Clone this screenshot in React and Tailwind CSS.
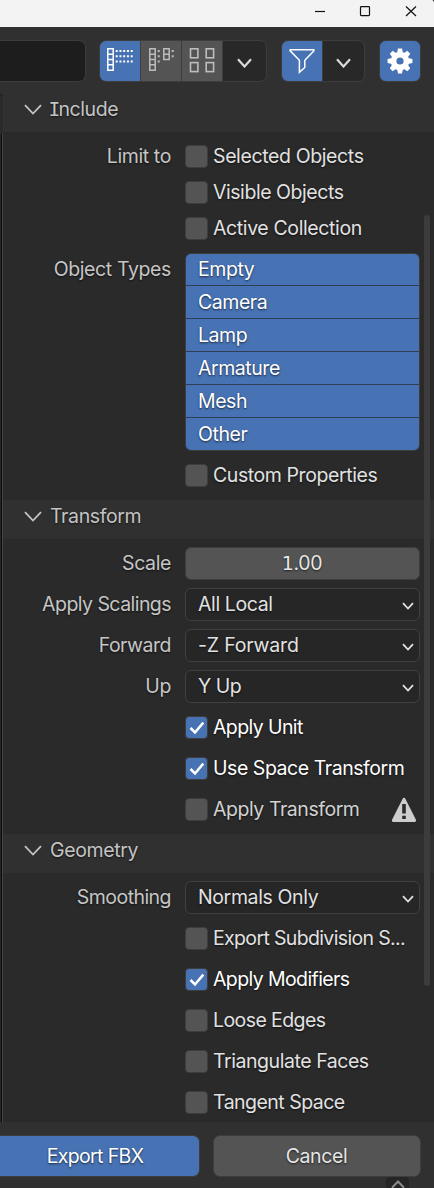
import React from 'react';

const textShadow = '[text-shadow:0_1px_2px_rgba(0,0,0,0.65)]';

function Chevron({ className = '', w = 14, h = 9, stroke = 2 }) {
  return (
    <svg width={w} height={h} viewBox={`0 0 ${w} ${h}`} fill="none" className={`shrink-0 ${className}`}>
      <path d={`M1 1.2L${w / 2} ${h - 1.5}L${w - 1} 1.2`} stroke="currentColor" strokeWidth={stroke} />
    </svg>
  );
}

function Header({ title, className = '' }) {
  return (
    <div className={`flex h-[39px] shrink-0 items-center bg-[#303030] pb-[7px] pl-[21px] text-[#c4c4c4] ${className}`}>
      <Chevron w={18} h={11} stroke={1.8} />
      <span className={`ml-2 ${textShadow}`}>{title}</span>
    </div>
  );
}

function Row({ label, children, tracking = '' }) {
  return (
    <div className="flex h-[33px] shrink-0 items-center">
      <div className={`w-[168px] shrink-0 pb-px text-right text-[#c6c6c6] ${tracking} ${textShadow}`}>{label}</div>
      <div className="ml-[14px] flex w-[235px] items-center">{children}</div>
    </div>
  );
}

function Check({ text, checked, dim, tracking = 'tracking-[-0.42px]' }) {
  return (
    <>
      <span
        className={`flex size-[23px] shrink-0 items-center justify-center rounded-[4px] border border-[#3d3d3d] ${
          checked ? 'bg-[#4772b3]' : 'bg-[#545454]'
        }`}
      >
        {checked && (
          <svg width="16" height="14" viewBox="0 0 16 14" fill="none">
            <path d="M1.5 7L6 11.5L14.3 1.6" stroke="#fff" strokeWidth="2.5" />
          </svg>
        )}
      </span>
      <span
        className={`ml-[5px] pb-px ${tracking} ${textShadow} ${
          checked ? 'text-white' : dim ? 'text-[#d2d2d2]' : 'text-[#e2e2e2]'
        }`}
      >
        {text}
      </span>
    </>
  );
}

function Select({ text, tracking = 'tracking-[-0.38px]' }) {
  return (
    <div className="flex h-[33px] w-full items-center justify-between rounded-[6px] border border-[#404040] bg-[#262626] pr-[5px] pl-[12px] text-[#e2e2e2]">
      <span className={`pb-px ${tracking} ${textShadow}`}>{text}</span>
      <Chevron w={12} h={8} stroke={1.8} className="mt-[3px]" />
    </div>
  );
}

function VerticalIcon() {
  return (
    <svg width="28" height="26" viewBox="0 0 28 26" fill="none" stroke="#fff" strokeWidth="1.5">
      <path d="M1.8 1.8H7.2V23.2H1.8ZM1.8 7.2H7.2M1.8 12.5H7.2M1.8 17.8H7.2" />
      <path d="M9.7 4H27M9.7 9.3H27M9.7 14.6H27" strokeWidth="2" strokeDasharray="2 1.75" />
    </svg>
  );
}

function HorizontalIcon() {
  return (
    <svg width="28" height="26" viewBox="0 0 28 26" fill="none" stroke="#bdbdbd" strokeWidth="1.5">
      <path d="M1.8 1.8H7.2V23.2H1.8ZM1.8 7.2H7.2M1.8 12.5H7.2M1.8 17.8H7.2" />
      <path d="M15.8 1.8H21.2V12.5H15.8ZM15.8 7.2H21.2" />
      <path d="M9.7 4H11.7M9.7 9.3H11.7M9.7 14.6H11.7M23.7 4H25.7M23.7 9.3H25.7" strokeWidth="2" />
    </svg>
  );
}

function ThumbIcon() {
  return (
    <svg width="26" height="26" viewBox="0 0 26 26" fill="none" stroke="#bdbdbd" strokeWidth="1.6">
      <rect x="1.5" y="1.8" width="7.4" height="9" />
      <rect x="17.2" y="1.8" width="7.4" height="9" />
      <rect x="1.5" y="15.6" width="7.4" height="9" />
      <rect x="17.2" y="15.6" width="7.4" height="9" />
    </svg>
  );
}

function Gear() {
  return (
    <svg width="26" height="26" viewBox="-13 -13 26 26" fill="#fff">
      <path
        fillRule="evenodd"
        d="M0-9.2A9.2 9.2 0 1 1 0 9.2A9.2 9.2 0 1 1 0-9.2ZM0-3.6A3.6 3.6 0 1 0 0 3.6A3.6 3.6 0 1 0 0-3.6Z"
      />
      {[0, 45, 90, 135, 180, 225, 270, 315].map((a) => (
        <path key={a} transform={`rotate(${a})`} d="M-2.9-8L-2-12.4H2L2.9-8Z" />
      ))}
    </svg>
  );
}

const types = ['Empty', 'Camera', 'Lamp', 'Armature', 'Mesh', 'Other'];

export default function App() {
  return (
    <div className="flex h-[1188px] w-[434px] flex-col overflow-hidden bg-[#303030] font-['Inter',sans-serif] text-[19.5px] leading-[24px] tracking-[-0.38px] whitespace-nowrap">
      <div className="flex h-[27px] shrink-0 items-start justify-end bg-[#f3f3f3]">
        <svg width="120" height="27" viewBox="314 0 120 27" fill="none" stroke="#111" strokeWidth="1.2">
          <path d="M315 11.5H325" />
          <rect x="360.5" y="6.6" width="9" height="9" rx="0.8" />
          <path d="M406 6.5L416 16M416 6.5L406 16" />
          <path d="M432.5 0H434V2Z" fill="#333" stroke="none" />
        </svg>
      </div>

      <div className="flex h-[66px] shrink-0 items-start pt-[13px]">
        <div className="h-[42px] w-[86px] shrink-0 rounded-r-[7px] border border-l-0 border-[#3d3d3d] bg-[#1d1d1d]" />
        <div className="ml-[13px] flex h-[42px] w-[168px] shrink-0 overflow-hidden rounded-[7px] border border-[#3d3d3d] bg-[#3d3d3d]">
          <div className="flex w-10 items-center justify-center bg-[#4772b3] pb-[2px]"><VerticalIcon /></div>
          <div className="ml-px flex w-10 items-center justify-center bg-[#545454] pb-[2px] pl-px"><HorizontalIcon /></div>
          <div className="ml-px flex w-10 items-center justify-center bg-[#545454] pb-[2px]"><ThumbIcon /></div>
          <div className="ml-px flex flex-1 items-center justify-center bg-[#282828] pt-[3px] pr-[1px] text-[#d9d9d9]"><Chevron w={15} h={10} stroke={2.2} /></div>
        </div>
        <div className="ml-[14px] flex h-[42px] w-[84px] shrink-0 overflow-hidden rounded-[7px] border border-[#3d3d3d] bg-[#3d3d3d]">
          <div className="flex w-10 items-center justify-center bg-[#4772b3]">
            <svg width="26" height="26" viewBox="0 0 26 26" fill="none" stroke="#fff" strokeWidth="1.5">
              <path d="M1.2 1.7H24.8V2.9L15.8 12.2V19.5L10.4 24.3V12.2L1.2 2.9Z" />
            </svg>
          </div>
          <div className="ml-px flex flex-1 items-center justify-center bg-[#282828] pt-[3px] text-[#d9d9d9]"><Chevron w={15} h={10} stroke={2.2} /></div>
        </div>
        <div className="ml-[14px] flex size-[42px] shrink-0 items-center justify-center rounded-[7px] border border-[#3d3d3d] bg-[#4772b3]"><Gear /></div>
      </div>

      <div className="relative flex h-[1029px] shrink-0 flex-col overflow-hidden bg-[#2a2a2a] pl-[3px]">
        <Header title={<><span className="-mr-[1.5px] -ml-[1.5px] font-['DejaVu_Sans_Mono',monospace] leading-none">I</span>nclude</>} />
        <div className="mt-2 flex flex-col gap-[3px]">
          <Row label="Limit to"><Check text="Selected Objects" tracking="tracking-[-0.38px]" /></Row>
          <Row><Check text="Visible Objects" tracking="tracking-[-0.45px]" /></Row>
          <Row><Check text="Active Collection" tracking="tracking-[-0.38px]" /></Row>
        </div>
        <div className="mt-2 flex h-[198px] shrink-0">
          <div className={`w-[168px] pt-1 text-right text-[#c6c6c6] ${textShadow}`}>Object Types</div>
          <div className="ml-[14px] flex w-[235px] flex-col gap-px overflow-hidden rounded-[6px] border border-[#3d3d3d] bg-[#2f3d55] tracking-[-0.45px]">
            {types.map((t) => (
              <div key={t} className={`h-8 bg-[#4772b3] pt-1 pl-[12px] text-white first:h-[31px] first:pt-[3px] ${textShadow}`}>{t}</div>
            ))}
          </div>
        </div>
        <div className="my-2">
          <Row><Check text="Custom Properties" /></Row>
        </div>
        <Header title="Transform" />
        <div className="my-2 flex flex-col gap-2">
          <Row label="Scale">
            <div className={`flex h-[33px] w-full items-center justify-center rounded-[6px] border border-[#3d3d3d] bg-[#545454] pr-px pb-px text-[#e6e6e6] ${textShadow}`}>
              <span><span className="font-['DejaVu_Sans',sans-serif] text-[19px] leading-none">1</span>.00</span>
            </div>
          </Row>
          <Row label="Apply Scalings" tracking="tracking-[-0.55px]"><Select text="All Local" /></Row>
          <Row label="Forward" tracking="tracking-[-0.5px]"><Select text="-Z Forward" tracking="tracking-[-0.18px]" /></Row>
          <Row label="Up"><Select text="Y Up" tracking="tracking-[-0.5px]" /></Row>
          <Row><Check text="Apply Unit" checked tracking="tracking-[-0.6px]" /></Row>
          <Row><Check text="Use Space Transform" checked tracking="tracking-[-0.45px]" /></Row>
          <Row>
            <Check text="Apply Transform" dim tracking="tracking-[-0.45px]" />
            <svg width="26" height="26" viewBox="0 0 26 26" className="mr-[3px] ml-auto">
              <path d="M13 2.4L23.6 23.4H2.4Z" fill="#cdcdcd" stroke="#cdcdcd" strokeWidth="3" strokeLinejoin="round" />
              <path d="M11.2 7H14.8V16.5H11.2ZM11.2 18.7H14.8V22H11.2Z" fill="#2a2a2a" />
            </svg>
          </Row>
        </div>
        <Header title="Geometry" />
        <div className="mt-2 flex flex-col gap-2">
          <Row label="Smoothing" tracking="tracking-[-0.55px]"><Select text="Normals Only" /></Row>
          <Row><Check text="Export Subdivision S..." tracking="tracking-[-0.65px]" /></Row>
          <Row><Check text="Apply Modifiers" checked tracking="tracking-[-0.6px]" /></Row>
          <Row><Check text="Loose Edges" tracking="tracking-[-0.58px]" /></Row>
          <Row><Check text="Triangulate Faces" tracking="tracking-[-0.45px]" /></Row>
          <Row><Check text="Tangent Space" tracking="tracking-[-0.52px]" /></Row>
        </div>
        <div className="absolute top-[2px] left-0 h-px w-[3px] bg-[#1f1f1f]" />
        <div className="absolute top-[41px] left-0 flex h-[988px] w-[3px]">
          <div className="w-px bg-[#262626]" />
          <div className="w-px bg-[#0c0c0c]" />
          <div className="w-px bg-[#464646]" />
        </div>
        <div className="absolute top-[122px] left-[424px] h-[771px] w-[6px] rounded-full bg-[#3c3c3c]" />
      </div>

      <div className="flex h-[66px] shrink-0 flex-col">
        <div className="mt-[13px] flex shrink-0">
          <div className={`flex h-[42px] w-[200px] items-center justify-center rounded-r-[7px] border border-l-0 border-[#3d3d3d] bg-[#4772b3] pr-[9px] tracking-[-0.65px] text-white ${textShadow}`}>Export FBX</div>
          <div className={`ml-[13px] flex h-[42px] w-[208px] items-center justify-center rounded-[7px] border border-[#3d3d3d] bg-[#545454] pr-px text-[#e6e6e6] ${textShadow}`}>Cancel</div>
        </div>
        <div className="ml-[386px] flex h-[11px] w-[23px] justify-center rounded-t-[4px] bg-[#252525] pt-[3px] text-[#8a8a8a]">
          <Chevron w={14} h={9} className="rotate-180" />
        </div>
      </div>
    </div>
  );
}
